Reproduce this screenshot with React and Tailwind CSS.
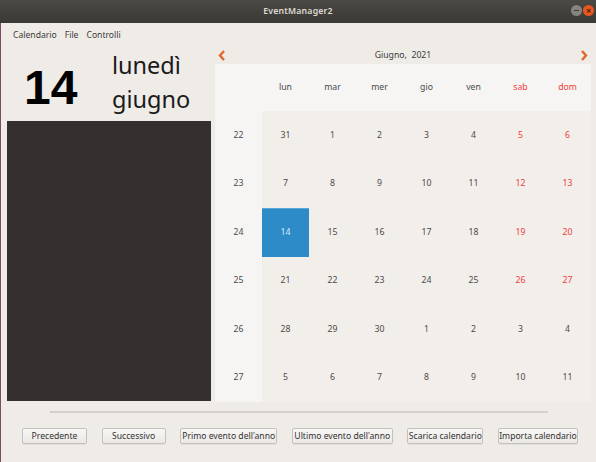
import React from "react";

const rows = [
  [22, [31, 1, 2, 3, 4, 5, 6], [false, true, true, true, true, true, true]],
  [23, [7, 8, 9, 10, 11, 12, 13], [true, true, true, true, true, true, true]],
  [24, [14, 15, 16, 17, 18, 19, 20], [true, true, true, true, true, true, true]],
  [25, [21, 22, 23, 24, 25, 26, 27], [true, true, true, true, true, true, true]],
  [26, [28, 29, 30, 1, 2, 3, 4], [true, true, true, false, false, false, false]],
  [27, [5, 6, 7, 8, 9, 10, 11], [false, false, false, false, false, false, false]],
];
const days = ["lun", "mar", "mer", "gio", "ven", "sab", "dom"];
const buttons = [
  ["Precedente", "w-[65px]"],
  ["Successivo", "w-[64px]"],
  ["Primo evento dell'anno", "w-[97px]"],
  ["Ultimo evento dell'anno", "w-[101px]"],
  ["Scarica calendario", "w-[76px]"],
  ["Importa calendario", "w-[80px]"],
];

export default function App() {
  return (
    <div
      className="w-[596px] h-[462px] flex flex-col bg-[#efebe7] overflow-hidden"
      style={{ fontFamily: '"Noto Sans", "DejaVu Sans", sans-serif' }}
    >
      {/* title bar */}
      <div className="h-[23px] shrink-0 relative flex items-center justify-center bg-gradient-to-b from-[#4b4944] to-[#3a3935]">
        <span className="text-[8.7px] font-semibold text-[#dfdbd2] tracking-[0.2px]">EventManager2</span>
        <div className="absolute right-[2px] top-[5px] flex gap-[1px]">
          <div className="w-[11px] h-[11px] rounded-full bg-[#86847f] flex items-center justify-center">
            <div className="w-[5px] h-[1.5px] bg-[#3c3b37]" />
          </div>
          <div className="w-[11px] h-[11px] rounded-full bg-[#e9561f] flex items-center justify-center text-[9px] leading-none text-[#3c2010] font-bold">
            ×
          </div>
        </div>
      </div>
      <div className="flex-1 flex flex-col border-l border-[#7d4a64]">
        {/* menu bar */}
        <div className="h-[24px] shrink-0 flex items-center gap-[8px] pl-[12px] text-[8.6px] text-[#3c3c3c]">
          <span>Calendario</span>
          <span>File</span>
          <span>Controlli</span>
        </div>
        {/* main */}
        <div className="flex h-[355px] shrink-0">
          <div className="w-[204px] ml-[6px] flex flex-col">
            <div className="h-[74px] flex">
              <div
                className="w-[105px] pl-[17px] pt-[7px] text-[48px] font-bold text-black leading-none flex items-center"
                style={{ fontFamily: '"Liberation Sans", Arial, sans-serif' }}
              >
                14
              </div>
              <div className="flex flex-col text-[23.5px] leading-[34px] text-[#1a1a1a] pt-[1px]">
                <span>lunedì</span>
                <span>giugno</span>
              </div>
            </div>
            <div className="h-[280px] bg-[#353030]" />
          </div>
          <div className="w-[376px] ml-[4px] flex flex-col text-[8.7px] text-[#4a4a4a]">
            <div className="h-[17px] bg-[#efebe6] flex items-center justify-between px-[3px]">
              <svg width="8" height="11" viewBox="0 0 8 11">
                <path d="M6 1 L2 5.5 L6 10" fill="none" stroke="#e0662a" strokeWidth="2.4" />
              </svg>
              <span className="text-[#3c3c3c]">Giugno,&nbsp; 2021</span>
              <svg width="8" height="11" viewBox="0 0 8 11">
                <path d="M2 1 L6 5.5 L2 10" fill="none" stroke="#e0662a" strokeWidth="2.4" />
              </svg>
            </div>
            <div className="h-[47px] bg-[#f6f5f4] grid grid-cols-8">
              <div />
              {days.map((d, i) => (
                <div
                  key={d}
                  className={`flex items-center justify-center ${i >= 5 ? "text-[#f03c3c]" : ""}`}
                >
                  {d}
                </div>
              ))}
            </div>
            <div className="flex-1 flex">
              <div className="w-[47px] bg-[#f6f5f4] grid grid-rows-6">
                {rows.map(([w]) => (
                  <div key={w} className="flex items-center justify-center">
                    {w}
                  </div>
                ))}
              </div>
              <div className="flex-1 bg-[#f2eee9] grid grid-rows-6">
                {rows.map(([w, ds, cur]) => (
                  <div key={w} className="grid grid-cols-7">
                    {ds.map((d, i) => {
                      const sel = w === 24 && d === 14;
                      const red = cur[i] && i >= 5;
                      return (
                        <div
                          key={i}
                          className={`flex items-center justify-center ${
                            sel
                              ? "bg-[#2d8bc8] text-[#dcebf6] border-t border-[#5aa6d8]"
                              : red
                              ? "text-[#f03c3c]"
                              : ""
                          }`}
                        >
                          {d}
                        </div>
                      );
                    })}
                  </div>
                ))}
              </div>
            </div>
          </div>
        </div>
        {/* separator */}
        <div className="h-[2px] w-[498px] ml-[49px] mt-[9px] bg-[#d4d0cb] shrink-0" />
        {/* buttons */}
        <div className="flex gap-[14.6px] ml-[21px] mt-[15px]">
          {buttons.map(([t, w]) => (
            <div
              key={t}
              className={`${w} h-[16px] flex items-center justify-center whitespace-nowrap text-[8.6px] text-[#333] border border-[#c4c0ba] rounded-[2px] bg-gradient-to-b from-[#f8f7f6] to-[#ebe8e4] shadow-[0_1px_0_rgba(0,0,0,0.05)]`}
            >
              {t}
            </div>
          ))}
        </div>
      </div>
    </div>
  );
}
